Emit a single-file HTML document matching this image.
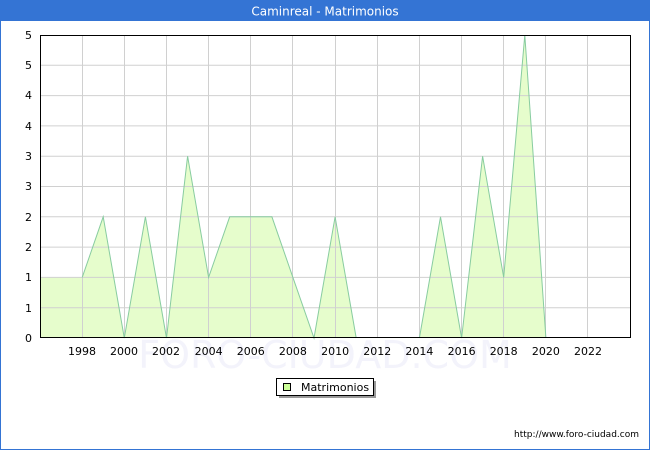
<!DOCTYPE html>
<html><head><meta charset="utf-8"><style>
body{margin:0;width:650px;height:450px;overflow:hidden;background:#fff;font-family:"DejaVu Sans","Liberation Sans",sans-serif;}
</style></head><body>
<svg width="650" height="450" xmlns="http://www.w3.org/2000/svg" font-family="DejaVu Sans, Liberation Sans, sans-serif">
<rect x="0.5" y="0.5" width="649" height="449" fill="#fff" stroke="#3474d4"/>
<rect x="0" y="0" width="650" height="21" fill="#3474d4"/>
<text x="325" y="15.5" font-size="12" fill="#fff" text-anchor="middle">Caminreal - Matrimonios</text>
<text x="325" y="368" font-size="38" fill="#f3f3fb" text-anchor="middle">FORO-CIUDAD.COM</text>
<polygon fill="#e6fdcc" points="40,338 40,277.4 82.2,277.4 103.2,216.8 124.3,338 145.4,216.8 166.5,338 187.6,156.2 208.6,277.4 229.7,216.8 271.9,216.8 292.9,277.4 314,338 335.1,216.8 356.2,338 419.4,338 440.5,216.8 461.6,338 482.6,156.2 503.7,277.4 524.8,35 545.9,338"/>
<g stroke="#d0d0d0" stroke-width="1">
<line x1="40" y1="307.7" x2="631" y2="307.7"/><line x1="40" y1="277.4" x2="631" y2="277.4"/>
<line x1="40" y1="247.1" x2="631" y2="247.1"/><line x1="40" y1="216.8" x2="631" y2="216.8"/>
<line x1="40" y1="186.5" x2="631" y2="186.5"/><line x1="40" y1="156.2" x2="631" y2="156.2"/>
<line x1="40" y1="125.9" x2="631" y2="125.9"/><line x1="40" y1="95.6" x2="631" y2="95.6"/>
<line x1="40" y1="65.3" x2="631" y2="65.3"/>
<line x1="82.5" y1="35" x2="82.5" y2="338"/><line x1="124.5" y1="35" x2="124.5" y2="338"/>
<line x1="166.5" y1="35" x2="166.5" y2="338"/><line x1="208.5" y1="35" x2="208.5" y2="338"/>
<line x1="250.5" y1="35" x2="250.5" y2="338"/><line x1="292.5" y1="35" x2="292.5" y2="338"/>
<line x1="335.5" y1="35" x2="335.5" y2="338"/><line x1="377.5" y1="35" x2="377.5" y2="338"/>
<line x1="419.5" y1="35" x2="419.5" y2="338"/><line x1="461.5" y1="35" x2="461.5" y2="338"/>
<line x1="503.5" y1="35" x2="503.5" y2="338"/><line x1="545.5" y1="35" x2="545.5" y2="338"/>
<line x1="587.5" y1="35" x2="587.5" y2="338"/>
</g>
<polyline fill="none" stroke="#88cca0" stroke-width="1" points="82.2,277.4 103.2,216.8 124.3,338 145.4,216.8 166.5,338 187.6,156.2 208.6,277.4 229.7,216.8 271.9,216.8 292.9,277.4 314,338 335.1,216.8 356.2,338"/>
<polyline fill="none" stroke="#88cca0" stroke-width="1" points="419.4,338 440.5,216.8 461.6,338 482.6,156.2 503.7,277.4 524.8,35 545.9,338"/>
<rect x="40.5" y="35.5" width="590" height="302" fill="none" stroke="#000"/>
<g font-size="11" fill="#000" text-anchor="end">
<text x="32" y="342">0</text><text x="32" y="312">1</text><text x="32" y="281">1</text>
<text x="32" y="251">2</text><text x="32" y="221">2</text><text x="32" y="190">3</text>
<text x="32" y="160">3</text><text x="32" y="130">4</text><text x="32" y="99">4</text>
<text x="32" y="69">5</text><text x="32" y="39">5</text>
</g>
<g font-size="11" fill="#000" text-anchor="middle">
<text x="82" y="355">1998</text><text x="124" y="355">2000</text><text x="166" y="355">2002</text>
<text x="208.6" y="355">2004</text><text x="250.8" y="355">2006</text><text x="292.9" y="355">2008</text>
<text x="335.1" y="355">2010</text><text x="377.3" y="355">2012</text><text x="419.4" y="355">2014</text>
<text x="461.6" y="355">2016</text><text x="503.7" y="355">2018</text><text x="545.9" y="355">2020</text>
<text x="588" y="355">2022</text>
</g>
<rect x="279" y="381" width="97" height="17" fill="#999"/>
<rect x="276.5" y="378.5" width="97" height="17" fill="#fff" stroke="#000"/>
<rect x="283.5" y="383.5" width="7" height="7" fill="#ccff99" stroke="#000"/>
<text x="301" y="391" font-size="11" fill="#000">Matrimonios</text>
<text x="639" y="437" font-size="9" fill="#000" text-anchor="end">http://www.foro-ciudad.com</text>
</svg>
</body></html>
